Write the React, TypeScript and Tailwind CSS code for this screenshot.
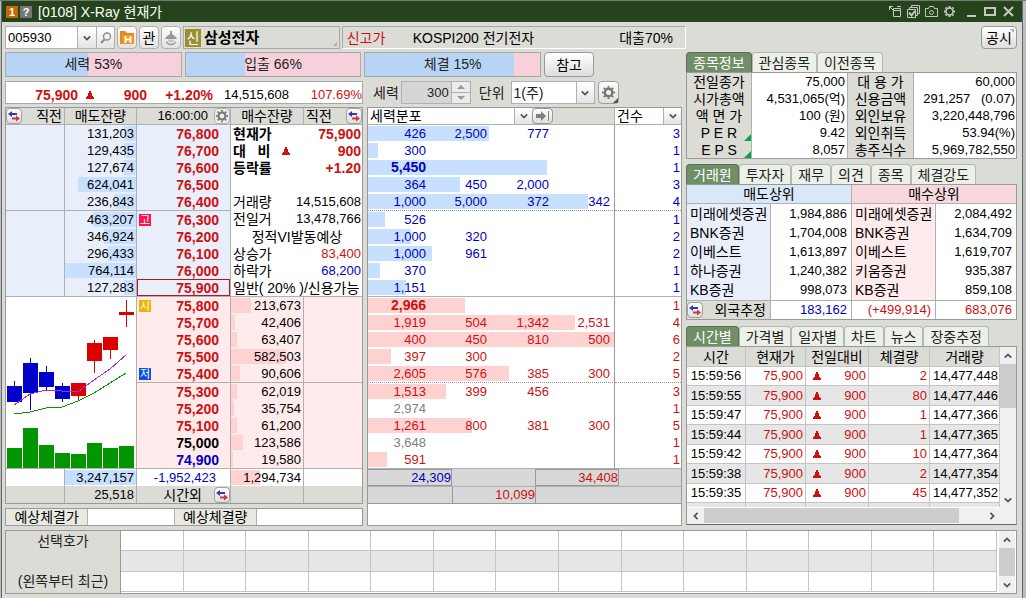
import { useState, type ReactNode } from 'react'

interface AskRow { qty: number; price: string; mark?: boolean }
interface BidRow { price: string; qty: number; tone: string; mark?: { text: string; color: string } }
interface PowerRow { values: string[]; count: number; total: number; tone: string; bold?: boolean }

const MAX_QTY = 764114
const MAX_POWER = 7500
const RED = 'text-[#cc1111]'
const BLUE = 'text-[#0000c0]'

const asks: AskRow[] = [
  { qty: 131203, price: '76,800' },
  { qty: 129435, price: '76,700' },
  { qty: 127674, price: '76,600' },
  { qty: 624041, price: '76,500' },
  { qty: 236843, price: '76,400' },
  { qty: 463207, price: '76,300', mark: true },
  { qty: 346924, price: '76,200' },
  { qty: 296433, price: '76,100' },
  { qty: 764114, price: '76,000' },
  { qty: 127283, price: '75,900' },
]

const bids: BidRow[] = [
  { price: '75,800', qty: 213673, tone: RED, mark: { text: '시', color: 'bg-[#f0b400]' } },
  { price: '75,700', qty: 42406, tone: RED },
  { price: '75,600', qty: 63407, tone: RED },
  { price: '75,500', qty: 582503, tone: RED },
  { price: '75,400', qty: 90606, tone: RED, mark: { text: '저', color: 'bg-[#0a50e6]' } },
  { price: '75,300', qty: 62019, tone: RED },
  { price: '75,200', qty: 35754, tone: RED },
  { price: '75,100', qty: 61200, tone: RED },
  { price: '75,000', qty: 123586, tone: 'text-black' },
  { price: '74,900', qty: 19580, tone: BLUE },
]

const askPower: PowerRow[] = [
  { values: ['426', '2,500', '777'], count: 3, total: 3703, tone: BLUE },
  { values: ['300'], count: 1, total: 300, tone: BLUE },
  { values: ['5,450'], count: 1, total: 5450, tone: BLUE, bold: true },
  { values: ['364', '450', '2,000'], count: 3, total: 2814, tone: BLUE },
  { values: ['1,000', '5,000', '372', '342'], count: 4, total: 6714, tone: BLUE },
  { values: ['526'], count: 1, total: 526, tone: BLUE },
  { values: ['1,000', '320'], count: 2, total: 1320, tone: BLUE },
  { values: ['1,000', '961'], count: 2, total: 1961, tone: BLUE },
  { values: ['370'], count: 1, total: 370, tone: BLUE },
  { values: ['1,151'], count: 1, total: 1151, tone: BLUE },
]

const bidPower: PowerRow[] = [
  { values: ['2,966'], count: 1, total: 2966, tone: RED, bold: true },
  { values: ['1,919', '504', '1,342', '2,531'], count: 4, total: 6296, tone: RED },
  { values: ['400', '450', '810', '500'], count: 6, total: 7500, tone: RED },
  { values: ['397', '300'], count: 2, total: 697, tone: RED },
  { values: ['2,605', '576', '385', '300'], count: 5, total: 4300, tone: RED },
  { values: ['1,513', '399', '456'], count: 3, total: 2368, tone: RED },
  { values: ['2,974'], count: 1, total: 0, tone: 'text-[#808080]' },
  { values: ['1,261', '800', '381', '300'], count: 5, total: 3160, tone: RED },
  { values: ['3,648'], count: 1, total: 0, tone: 'text-[#808080]' },
  { values: ['591'], count: 1, total: 591, tone: RED },
]

const stockInfo = [
  ['전일종가', '75,000', '대 용 가', '60,000'],
  ['시가총액', '4,531,065(억)', '신용금액', '291,257   (0.07)'],
  ['액 면 가', '100 (원)', '외인보유', '3,220,448,796'],
  ['P E R', '9.42', '외인취득', '53.94(%)'],
  ['E P S', '8,057', '총주식수', '5,969,782,550'],
]

const brokers = [
  ['미래에셋증권', '1,984,886', '미래에셋증권', '2,084,492'],
  ['BNK증권', '1,704,008', 'BNK증권', '1,634,709'],
  ['이베스트', '1,613,897', '이베스트', '1,619,707'],
  ['하나증권', '1,240,382', '키움증권', '935,387'],
  ['KB증권', '998,073', 'KB증권', '859,108'],
]

const ticks = [
  ['15:59:56', '2', '14,477,448'],
  ['15:59:55', '80', '14,477,446'],
  ['15:59:47', '1', '14,477,366'],
  ['15:59:44', '1', '14,477,365'],
  ['15:59:42', '10', '14,477,364'],
  ['15:59:38', '2', '14,477,354'],
  ['15:59:35', '45', '14,477,352'],
]

// [wick top, body top, body bottom, wick bottom, volume top, up?]
const candles: [number, number, number, number, number, boolean][] = [
  [84, 89, 105, 105, 151, false],
  [61, 66, 96, 113, 131, false],
  [69, 75, 90, 93, 148, false],
  [86, 89, 102, 105, 156, false],
  [86, 86, 99, 104, 157, true],
  [43, 46, 64, 76, 146, true],
  [40, 40, 53, 62, 151, true],
  [3, 15, 18, 30, 149, true],
]

function UpMark() {
  return (
    <svg viewBox="0 0 8 8" className="inline-block w-2 h-2 shrink-0" fill="#cc1111" aria-hidden="true">
      <path d="M3 0h2v2h1v3h1v1h1v2H0V6h1V5h1V2h1z" />
    </svg>
  )
}

function SwapButton({ label }: { label: string }) {
  return (
    <button aria-label={label}
      className="flex items-center justify-center w-4 h-4 shrink-0 rounded border border-[#a0a0a0] bg-linear-to-b from-white to-[#dedede]">
      <svg viewBox="0 0 14 12" className="w-[14px] h-3 shrink-0">
        <path d="M1 4l4-3v2h5v2H5v2z" fill="#3838b8" />
        <path d="M13 8.500l-4-3v2H5v2h4v2z" fill="#d03838" />
      </svg>
    </button>
  )
}

function Gear({ className }: { className: string }) {
  return (
    <svg viewBox="0 0 16 16" className={className} stroke="#777" fill="none" aria-hidden="true">
      <circle cx="8" cy="8" r="4" strokeWidth="2.500" />
      <path strokeWidth="2" d="M8 1v2M8 13v2M1 8h2M13 8h2M3 3l1.500 1.500M11.500 11.500L13 13M13 3l-1.500 1.500M4.500 11.500L3 13" />
    </svg>
  )
}

function Chevron({ dir }: { dir: 'up' | 'down' | 'left' | 'right' }) {
  const d = {
    up: 'M1 7l4-4 4 4',
    down: 'M1 3l4 4 4-4',
    left: 'M7 1L3 5l4 4',
    right: 'M3 1l4 4-4 4',
  }[dir]
  return (
    <svg viewBox="0 0 10 10" className="w-2 h-2" fill="none" stroke="#555" strokeWidth="2.200" aria-hidden="true">
      <path d={d} />
    </svg>
  )
}

function DropDown({ label, value, className }: { label: string; value: string; className: string }) {
  return (
    <div className={`relative bg-white ${className}`}>
      <select aria-label={label} className="block w-full h-full appearance-none pl-0.5 leading-4 outline-none">
        <option>{value}</option>
      </select>
      <span className="pointer-events-none absolute inset-y-0 right-0 w-[18px] flex items-center justify-center border-l border-[#b0b0b0] bg-linear-to-b from-white to-[#e4e4e4]">
        <Chevron dir="down" />
      </span>
    </div>
  )
}

function Tabs({ names }: { names: string[] }) {
  const [active, setActive] = useState(0)
  return (
    <div role="tablist" className="flex h-5">
      {names.map((name, i) => (
        <button key={name} role="tab" aria-selected={i === active} onClick={() => setActive(i)}
          className={`h-5 px-1.5 rounded-t border border-b-0 leading-[18px] whitespace-nowrap ${
            i === active
              ? 'bg-[#6f8f66] border-[#5c6b58] text-white'
              : 'bg-[#ebf0e8] border-[#b4b8b0] text-[#222]'
          }`}>
          {name}
        </button>
      ))}
    </div>
  )
}

function VScroll({ thumb }: { thumb: string }) {
  return (
    <div className="w-4 shrink-0 flex flex-col bg-[#f0f0f0]">
      <button aria-label="위로" className="h-[17px] shrink-0 flex items-center justify-center"><Chevron dir="up" /></button>
      <div className={`bg-[#cdcdcd] ${thumb}`} />
      <button aria-label="아래로" className="h-[17px] shrink-0 mt-auto flex items-center justify-center"><Chevron dir="down" /></button>
    </div>
  )
}

function TitleBar() {
  return (
    <header className="flex items-center h-[21px] bg-[#26441c] text-white pl-1 pr-2">
      <span className="w-3 h-3 bg-[#c46a00] text-[11px] leading-3 font-bold text-center">1</span>
      <span className="w-3 h-3 ml-0.5 bg-[#777] text-[11px] leading-3 font-bold text-center">?</span>
      <h1 className="ml-1.5 flex-1 leading-5">[0108] X-Ray 현재가</h1>
      <div className="flex items-center gap-[5px] text-[#c4c9bf]">
        <button aria-label="창 이동">
          <svg viewBox="0 0 14 13" className="w-[14px] h-[13px]" fill="none" stroke="currentColor">
            <path d="M5.500 3.500h7v8h-7zM5 5.500h8M1 1l4 4M1.500 5V1.500H5" />
            <path d="M9 1.500h4" />
          </svg>
        </button>
        <button aria-label="화면 복사">
          <svg viewBox="0 0 13 13" className="w-[13px] h-[13px]" fill="none" stroke="currentColor">
            <path d="M.5 4.500h8v8h-8zM2.500 4V2.500h8v8H9M4.500 2V.5h8v8H11" />
            <path strokeWidth="2" d="M2 7.500l2.500 3L8 6" />
          </svg>
        </button>
        <button aria-label="화면 캡처">
          <svg viewBox="0 0 13 13" className="w-[13px] h-[13px]" fill="none" stroke="currentColor">
            <path d="M.5 3.500h3l1-2h4l1 2h3v8H.5z" />
            <circle cx="6.500" cy="7.500" r="2" />
          </svg>
        </button>
        <button aria-label="화면 설정">
          <svg viewBox="0 0 13 13" className="w-[13px] h-[13px]" fill="none" stroke="currentColor">
            <circle cx="6.500" cy="6.500" r="3.500" strokeWidth="1.500" />
            <path strokeWidth="2" d="M6.500 1v2M6.500 10v2M1 6.500h2M10 6.500h2M2.500 2.500l1 1M9.500 9.500l1 1M10.500 2.500l-1 1M3.500 9.500l-1 1" />
          </svg>
        </button>
      </div>
      <div className="flex items-center gap-[7px] ml-2.5 text-[#c4c9bf]">
        <button aria-label="최소화">
          <svg viewBox="0 0 11 11" className="w-[11px] h-[11px]" fill="none" stroke="currentColor" strokeWidth="2"><path d="M1 10h9" /></svg>
        </button>
        <button aria-label="최대화">
          <svg viewBox="0 0 12 11" className="w-3 h-[11px]" fill="none" stroke="currentColor" strokeWidth="2"><path d="M1 2h10v7H1z" /></svg>
        </button>
        <button aria-label="닫기">
          <svg viewBox="0 0 11 11" className="w-[11px] h-[11px]" fill="none" stroke="currentColor" strokeWidth="2"><path d="M1 1l9 9M10 1l-9 9" /></svg>
        </button>
      </div>
    </header>
  )
}

const ICON_BUTTON = 'w-5 h-[23px] shrink-0 flex items-center justify-center rounded border border-[#b0b0b0] bg-linear-to-b from-white to-[#e2e2e2]'

function SearchRow() {
  return (
    <div className="flex gap-0.5 h-[23px] -mr-1">
      <div className="flex w-[110px] shrink-0 border border-[#b0b0b0] bg-white">
        <input aria-label="종목코드" defaultValue="005930" className="w-[71px] min-w-0 pl-0.5 text-[13px] outline-none" />
        <button aria-label="종목 목록" className="w-[19px] flex items-center justify-center border-l border-[#b0b0b0] bg-linear-to-b from-white to-[#e4e4e4]">
          <Chevron dir="down" />
        </button>
        <button aria-label="종목 검색" className="flex-1 flex items-center justify-center border-l border-[#b0b0b0] bg-linear-to-b from-white to-[#e4e4e4]">
          <svg viewBox="0 0 12 12" className="w-3 h-3" fill="none" stroke="#8a8a8a">
            <circle cx="7" cy="4.500" r="3.500" strokeWidth="1.300" />
            <path d="M4.500 7.500L1 11" strokeWidth="2" />
          </svg>
        </button>
      </div>
      <button aria-label="보유종목" className={ICON_BUTTON}>
        <svg viewBox="0 0 16 15" className="w-4 h-[15px] shrink-0">
          <path d="M1 1h5l2 2h7v11H1z" fill="#e08a1e" />
          <path d="M3 5h12v9H3z" fill="#f0961e" />
          <path d="M6.500 6v7M11.500 6v7M6 9.500h5" stroke="#fff" strokeWidth="1.800" />
        </svg>
      </button>
      <button className={`${ICON_BUTTON} leading-5`}>관</button>
      <button aria-label="조명" className={ICON_BUTTON}>
        <svg viewBox="0 0 14 16" className="w-[14px] h-4 shrink-0">
          <path d="M6 1h2v3l4 3 1 2H1l1-2 4-3z" fill="#9a9a9a" />
          <path d="M4 9.500h6v1.500l-2 1.500H6L4 11z" fill="#c4c4c4" />
          <path d="M2.500 11.500c1 4 8 4 9 0" fill="none" stroke="#9a9a9a" strokeWidth="1.300" />
        </svg>
      </button>
      <div className="flex flex-[160] min-w-0 items-center border border-[#a8a8a8] px-px relative">
        <span className="w-4 h-[18px] bg-[#9a8f30] text-white text-center leading-[18px]">신</span>
        <h2 className="ml-[3px] text-[15px] leading-5 font-bold">삼성전자</h2>
        <svg viewBox="0 0 4 4" className="absolute right-0.5 bottom-0.5 w-1 h-1" fill="#aaa"><path d="M4 0v4H0z" /></svg>
      </div>
      <div className="flex flex-[342] min-w-0 items-center border border-[#a8a8a8] border-r-white border-b-white pl-1 pr-3 whitespace-nowrap">
        <span className={`w-[66px] ${RED}`}>신고가</span>
        <span className="flex-1">KOSPI200 전기전자</span>
        <span>대출70%</span>
      </div>
    </div>
  )
}

function Gauge({ name, percent }: { name: string; percent: number }) {
  return (
    <div className="relative flex-1 h-[25px] border border-[#a8a8a8] bg-[#f6d0da]">
      <div className="absolute inset-y-0 left-0 bg-[#b8d4f4]" style={{ width: `${100 - percent}%` }} />
      <span className="relative block text-center leading-[23px] text-[#222]">{name} {percent}%</span>
    </div>
  )
}

function SummaryRow() {
  return (
    <div className="grid grid-cols-[minmax(0,358fr)_minmax(0,315fr)] gap-1 h-[23px]">
      <div className={`flex items-center h-[23px] pt-1 border border-[#a8a8a8] bg-white font-bold ${RED}`}>
        <span className="w-[72px] text-right">75,900</span>
        <span className="w-4 ml-2 flex"><UpMark /></span>
        <span className="w-[45px] text-right">900</span>
        <span className="flex-1 text-right">+1.20%</span>
        <span className="w-[76px] text-right text-[13px] font-normal text-black">14,515,608</span>
        <span className="w-[73px] text-right text-[13px] font-normal">107.69%</span>
      </div>
      <div className="flex items-center pl-1.5 text-[#222]">
        <label htmlFor="power">세력</label>
        <div className="flex ml-0.5 h-[23px] border border-[#b0b0b0]">
          <input id="power" defaultValue="300" className="w-[49px] pr-0.5 bg-[#d6d6d6] text-right text-[13px] outline-none" />
          <div className="w-[19px] flex flex-col border-l border-[#b0b0b0] bg-[#ececec]">
            <button aria-label="증가" className="flex-1 flex items-center justify-center border-b border-[#b0b0b0]">
              <svg viewBox="0 0 8 4" className="w-2 h-1" fill="#999"><path d="M4 0l4 4H0z" /></svg>
            </button>
            <button aria-label="감소" className="flex-1 flex items-center justify-center">
              <svg viewBox="0 0 8 4" className="w-2 h-1" fill="#999"><path d="M4 4L0 0h8z" /></svg>
            </button>
          </div>
        </div>
        <span className="ml-2">단위</span>
        <DropDown label="단위" value="1(주)" className="ml-1.5 w-[84px] h-[23px] border border-[#b0b0b0]" />
        <button aria-label="설정" className="relative ml-[3px] w-[21px] h-[23px] flex items-center justify-center rounded border border-[#a0a0a0] bg-linear-to-b from-white to-[#dedede]">
          <Gear className="w-[15px] h-[15px]" />
          <svg viewBox="0 0 5 5" className="absolute right-0 bottom-0 w-[5px] h-[5px]" fill="#555"><path d="M5 0v5H0z" /></svg>
        </button>
      </div>
    </div>
  )
}

function CandleChart() {
  return (
    <svg viewBox="0 0 130 171" preserveAspectRatio="none" className="block w-full h-[171px]" shapeRendering="crispEdges">
      {candles.map(([high, top, bottom, low, volume, up], i) => (
        <g key={i} fill={up ? '#dd0000' : '#0000c8'}>
          <rect x={1 + i * 16} y={top} width="15" height={bottom - top} />
          <rect x={8 + i * 16} y={high} width="1" height={low - high} />
          <rect x={1 + i * 16} y={volume} width="15" height={171 - volume} fill="#009600" />
        </g>
      ))}
      <polyline points="8,108 24,97 40,93 56,94 72,95 88,83 104,72 120,58" fill="none" stroke="#9933ee" />
      <polyline points="8,117 24,115 40,111 56,110 72,104 88,96 104,86 120,76" fill="none" stroke="#009600" />
    </svg>
  )
}

function QuoteSummary() {
  const row = 'flex justify-between items-center h-[17px] whitespace-nowrap'
  const num = 'text-[13px]'
  return (
    <div className="h-[171px] pl-0.5 pr-px bg-white">
      <div className={`${row} font-bold`}><span>현재가</span><span className={RED}>75,900</span></div>
      <div className={`${row} font-bold`}>
        <span className="whitespace-pre">대   비</span>
        <span className="flex-1 pl-3 flex"><UpMark /></span>
        <span className={RED}>900</span>
      </div>
      <div className={`${row} font-bold`}><span>등락률</span><span className={RED}>+1.20</span></div>
      <div className={row} />
      <div className={row}><span>거래량</span><span className={num}>14,515,608</span></div>
      <div className={row}><span>전일거</span><span className={num}>13,478,766</span></div>
      <div className="h-[18px] text-center whitespace-nowrap leading-5">정적VI발동예상</div>
      <div className={row}><span>상승가</span><span className={`${num} ${RED}`}>83,400</span></div>
      <div className={row}><span>하락가</span><span className={`${num} ${BLUE}`}>68,200</span></div>
      <div className={row}>일반( 20% )/신용가능</div>
    </div>
  )
}

function QtyBar({ value, max, side, children }: { value: number; max: number; side: 'ask' | 'bid'; children: ReactNode }) {
  return (
    <div className="relative h-[17px]">
      <div className={`absolute top-px h-[15px] ${side === 'ask' ? 'right-0 bg-[#c8e0ff]' : 'left-0 bg-[#ffd2d2]'}`}
        style={{ width: `${(value / max) * 100}%` }} />
      <span className="relative block pr-0.5 text-right text-[13px] leading-[17px]">{children}</span>
    </div>
  )
}

function OrderBook() {
  const head = 'h-[17px] p-0 font-normal bg-[#dcdcd6] border-b border-[#b0b0b0]'
  // the fifth and the last rung of each side carry a rule
  const line = (i: number) => (i % 5 === 4 ? 'h-[18px] border-b border-[#b0b0b0]' : 'h-[17px] border-[#b0b0b0]')
  return (
    <div className="border border-[#999] bg-white">
      <table className="w-full table-fixed border-separate border-spacing-0 leading-4">
        <colgroup>
          <col className="w-[59px]" /><col className="w-[72px]" /><col className="w-[94px]" /><col className="w-[73px]" /><col className="w-[58px]" />
        </colgroup>
        <thead>
          <tr>
            <th className={`${head} border-r`}><div className="flex justify-between pr-0.5"><SwapButton label="매도 전환" />직전</div></th>
            <th className={`${head} border-r`}>매도잔량</th>
            <th className={`${head} border-r`}>
              <div className="flex justify-end items-center gap-1.5 text-[13px]">
                16:00:00
                <button aria-label="호가 설정" className="w-4 h-4 flex items-center justify-center rounded border border-[#b0b0b0] bg-[#eee]"><Gear className="w-[14px] h-[14px]" /></button>
              </div>
            </th>
            <th className={`${head} border-r`}>매수잔량</th>
            <th className={head}><div className="flex justify-between pl-0.5">직전<SwapButton label="매수 전환" /></div></th>
          </tr>
        </thead>
        <tbody>
          {asks.map((row, i) => (
            <tr key={row.price}>
              <td className={`p-0 border-r bg-[#e8effb] ${line(i)}`} />
              <td className={`p-0 border-r bg-[#e8effb] align-top ${line(i)}`}>
                <QtyBar value={row.qty} max={MAX_QTY} side="ask">{row.qty.toLocaleString('en-US')}</QtyBar>
              </td>
              <td className={`p-0 border-r bg-[#e8effb] align-top ${line(i)}`}>
                <div className={`flex items-center h-[17px] pl-0.5 pr-[11px] ${i === 9 ? 'outline outline-1 -outline-offset-1 outline-[#c01414]' : ''}`}>
                  {row.mark && <span className="w-3 h-3 bg-[#ff1450] text-white text-[11px] leading-3 text-center">고</span>}
                  <span className={`ml-auto font-bold ${RED}`}>{row.price}</span>
                </div>
              </td>
              {i === 0 && <td rowSpan={10} colSpan={2} className="p-0 align-top border-b border-[#b0b0b0]"><QuoteSummary /></td>}
            </tr>
          ))}
          {bids.map((row, i) => (
            <tr key={row.price}>
              {i === 0 && <td rowSpan={10} colSpan={2} className="p-0 align-top border-r border-b border-[#b0b0b0]"><CandleChart /></td>}
              <td className={`p-0 border-r bg-[#ffebeb] align-top ${line(i)}`}>
                <div className="flex items-center h-[17px] pl-0.5 pr-[11px]">
                  {row.mark && <span className={`w-3 h-3 text-white text-[11px] leading-3 text-center ${row.mark.color}`}>{row.mark.text}</span>}
                  <span className={`ml-auto font-bold ${row.tone}`}>{row.price}</span>
                </div>
              </td>
              <td className={`p-0 border-r bg-[#ffebeb] align-top ${line(i)}`}>
                <QtyBar value={row.qty} max={MAX_QTY} side="bid">{row.qty.toLocaleString('en-US')}</QtyBar>
              </td>
              <td className={`p-0 bg-[#ffebeb] ${line(i)}`} />
            </tr>
          ))}
        </tbody>
        <tfoot>
          <tr>
            <td className="p-0 h-[17px] border-r border-[#b0b0b0]" />
            <td className="p-0 border-r border-[#b0b0b0]"><QtyBar value={1} max={1} side="ask">3,247,157</QtyBar></td>
            <td className={`p-0 pr-[14px] border-r border-[#b0b0b0] text-right text-[13px] ${BLUE}`}>-1,952,423</td>
            <td className="p-0 border-r border-[#b0b0b0]"><QtyBar value={1294734} max={3247157} side="bid">1,294,734</QtyBar></td>
            <td className="p-0" />
          </tr>
          <tr className="bg-[#dcdcd6]">
            <td className="p-0 h-[17px] border-r border-[#b0b0b0]" />
            <td className="p-0 pr-0.5 border-r border-[#b0b0b0] text-right text-[13px]">25,518</td>
            <td className="p-0 border-r border-[#b0b0b0]">
              <div className="flex justify-end items-center gap-3 h-[17px]">시간외<SwapButton label="시간외 전환" /></div>
            </td>
            <td className="p-0 border-r border-[#b0b0b0]" />
            <td className="p-0" />
          </tr>
        </tfoot>
      </table>
    </div>
  )
}

function PowerLine({ row, side, i }: { row: PowerRow; side: 'ask' | 'bid'; i: number }) {
  const rule = i === 4 ? 'h-[18px] border-b border-dotted border-b-[#999]' : i === 9 ? 'h-[18px] border-b border-b-[#b0b0b0]' : 'h-[17px]'
  const countTone = row.tone === BLUE ? BLUE : RED
  return (
    <tr>
      <td className={`p-0 align-top ${rule}`}>
        <div className="relative h-[17px] border-r border-[#999]">
          <div className={`absolute left-0 top-px h-[15px] ${side === 'ask' ? 'bg-[#c8e0ff]' : 'bg-[#ffd2d2]'}`}
            style={{ width: `${(row.total / MAX_POWER) * 100}%` }} />
          <div className={`relative grid grid-cols-[58fr_61fr_62fr_61fr_4fr] text-right leading-[17px] ${row.bold ? 'font-bold text-[14px]' : 'text-[13px]'} ${row.tone}`}>
            {row.values.map((value, n) => <span key={n}>{value}</span>)}
          </div>
        </div>
      </td>
      <td className={`p-0 pr-px text-right text-[13px] leading-[17px] align-top ${rule} ${countTone}`}>{row.count}</td>
    </tr>
  )
}

function PowerPanel() {
  return (
    <div className="border border-[#999] bg-white">
      <table className="w-full table-fixed border-separate border-spacing-0 leading-4">
        <colgroup><col className="w-[247px]" /><col className="w-[66px]" /></colgroup>
        <thead>
          <tr>
            <th className="p-0 h-[17px] font-normal bg-[#dcdcd6] border-r border-b border-[#b0b0b0]">
              <div className="flex h-4">
                <DropDown label="분포 종류" value="세력분포" className="w-[164px] h-4" />
                <button aria-label="다음" className="w-[21px] h-4 flex items-center justify-center rounded border border-[#999] bg-linear-to-b from-white to-[#dedede]">
                  <svg viewBox="0 0 14 10" className="w-[14px] h-[10px]" fill="#808080"><path d="M0 3h5V0l5 5-5 5V7H0zM12 0h1v10h-1z" /></svg>
                </button>
              </div>
            </th>
            <th className="p-0 font-normal border-b border-[#b0b0b0]"><DropDown label="건수" value="건수" className="h-4" /></th>
          </tr>
        </thead>
        <tbody>
          {askPower.map((row, i) => <PowerLine key={i} row={row} side="ask" i={i} />)}
          {bidPower.map((row, i) => <PowerLine key={i} row={row} side="bid" i={i} />)}
        </tbody>
      </table>
      <div className="bg-[#d8d8d8] text-[13px] leading-4 text-right">
        <div className="flex h-[18px] border-b border-[#b0b0b0]">
          <span className={`w-[84px] border border-l-0 border-[#999] ${BLUE}`}>24,309</span>
          <span className={`w-[84px] ml-[83px] border border-[#999] ${RED}`}>34,408</span>
        </div>
        <div className="flex h-[17px] border-b border-[#999]">
          <span className={`w-[84px] ml-[84px] border-x border-[#999] ${RED}`}>10,099</span>
        </div>
      </div>
    </div>
  )
}

function StockInfo() {
  const label = 'p-0 h-[17px] font-normal text-center bg-[#dcdcd6] border-r border-[#b0b0b0] whitespace-pre relative'
  return (
    <section>
      <Tabs names={['종목정보', '관심종목', '이전종목']} />
      <div className="border border-[#999] bg-white">
        <table className="w-full table-fixed border-separate border-spacing-0 leading-4">
          <colgroup><col className="w-[65px]" /><col className="w-[96px]" /><col className="w-[66px]" /><col className="w-[102px]" /></colgroup>
          <tbody>
            {stockInfo.map(([a, b, c, d], i) => (
              <tr key={a}>
                <th className={label}>
                  {a}
                  {i > 2 && <svg viewBox="0 0 7 7" className="absolute right-0 bottom-0 w-[7px] h-[7px]" fill="#00a550"><path d="M7 0v7H0z" /></svg>}
                </th>
                <td className="p-0 pr-0.5 text-right text-[13px] border-r border-[#b0b0b0]">{b}</td>
                <th className={label}>{c}</th>
                <td className="p-0 pr-px text-right text-[13px] whitespace-pre">{d}</td>
              </tr>
            ))}
          </tbody>
        </table>
      </div>
    </section>
  )
}

function Brokers() {
  const num = 'p-0 pr-1 text-right text-[13px]'
  return (
    <section>
      <Tabs names={['거래원', '투자자', '재무', '의견', '종목', '체결강도']} />
      <div className="border border-[#999] bg-white">
        <table className="w-full h-[134px] table-fixed border-separate border-spacing-0 leading-4">
          <colgroup><col className="w-[84px]" /><col className="w-[81px]" /><col className="w-[84px]" /><col className="w-[80px]" /></colgroup>
          <thead>
            <tr>
              <th colSpan={2} className="p-0 h-[19px] font-normal bg-[#d8e8f8] border-r border-b border-[#b0b0b0]">매도상위</th>
              <th colSpan={2} className="p-0 font-normal bg-[#f8d8dc] border-b border-[#b0b0b0]">매수상위</th>
            </tr>
          </thead>
          <tbody>
            {brokers.map(([seller, sold, buyer, bought]) => (
              <tr key={seller}>
                <td className="p-0 pl-[3px] whitespace-nowrap bg-[#e8effb] border-r border-[#b0b0b0]">{seller}</td>
                <td className={`${num} border-r border-[#b0b0b0]`}>{sold}</td>
                <td className="p-0 pl-[3px] whitespace-nowrap bg-[#ffebeb] border-r border-[#b0b0b0]">{buyer}</td>
                <td className={num}>{bought}</td>
              </tr>
            ))}
          </tbody>
          <tfoot>
            <tr>
              <td className="p-0 h-[19px] bg-[#dcdcd6] border-r border-t border-[#b0b0b0]">
                <div className="flex justify-between items-center pr-1"><SwapButton label="외국계 전환" />외국추정</div>
              </td>
              <td className={`${num} border-r border-t border-[#b0b0b0] ${BLUE}`}>183,162</td>
              <td className={`${num} border-r border-t border-[#b0b0b0] ${RED}`}>(+499,914)</td>
              <td className={`${num} border-t border-[#b0b0b0] ${RED}`}>683,076</td>
            </tr>
          </tfoot>
        </table>
      </div>
    </section>
  )
}

function TickList() {
  const cell = 'p-0 border-r border-b border-[#c4c4c4] text-[13px]'
  return (
    <section className="mt-px">
      <Tabs names={['시간별', '가격별', '일자별', '차트', '뉴스', '장중추정']} />
      <div className="flex h-[179px] border border-[#999] border-b-[#666] bg-[#f0f0f0]">
        <div className="flex-1 min-w-0 flex flex-col">
          <div className="border-b border-white">
            <table className="w-full bg-white table-fixed border-separate border-spacing-0 leading-4">
              <colgroup>
                <col className="w-[59px]" /><col className="w-[60px]" /><col className="w-[63px]" /><col className="w-[61px]" /><col className="w-[70px]" />
              </colgroup>
              <thead>
                <tr className="bg-[#dcdcd6]">
                  {['시간', '현재가', '전일대비', '체결량', '거래량'].map(name => (
                    <th key={name} className="p-0 h-5 font-normal border-r border-b border-[#c4c4c4]">{name}</th>
                  ))}
                </tr>
              </thead>
              <tbody>
                {ticks.map(([time, qty, volume], i) => (
                  <tr key={time} className={i % 2 ? 'h-5 bg-[#e6e6e6]' : 'h-[19px] bg-white'}>
                    <td className={`${cell} text-center`}>{time}</td>
                    <td className={`${cell} pr-0.5 text-right ${RED}`}>75,900</td>
                    <td className={`${cell} ${RED}`}>
                      <div className="flex items-center justify-between pl-[7px] pr-0.5"><UpMark />900</div>
                    </td>
                    <td className={`${cell} pr-0.5 text-right ${RED}`}>{qty}</td>
                    <td className={`${cell} pr-px text-right`}>{volume}</td>
                  </tr>
                ))}
                {/* top edge of the next row, scrolled out of view */}
                <tr className="h-1 bg-[#e6e6e6]">
                  {ticks.slice(0, 5).map(([time]) => <td key={time} className="p-0 border-r border-[#c4c4c4]" />)}
                </tr>
              </tbody>
            </table>
          </div>
          <div className="flex flex-1">
            <button aria-label="왼쪽으로" className="w-[17px] flex items-center justify-center"><Chevron dir="left" /></button>
            <div className="flex-[255] mb-px bg-[#cdcdcd]" />
            <div className="flex-[24]" />
            <button aria-label="오른쪽으로" className="w-[17px] flex items-center justify-center"><Chevron dir="right" /></button>
          </div>
        </div>
        <div className="flex pb-4"><VScroll thumb="h-11" /></div>
      </div>
    </section>
  )
}

function SelectedQuotes() {
  const columns = Array.from({ length: 14 })
  return (
    <section className="flex mt-1 h-16 border border-[#999] bg-white">
      <div className="w-[115px] shrink-0 flex flex-col justify-between items-center pt-0.5 pb-1 bg-[#dcdcd6] border-r border-[#999] text-[#222]">
        <span>선택호가</span>
        <span className="whitespace-nowrap">(왼쪽부터 최근)</span>
      </div>
      <table className="flex-1 h-[61px] table-fixed border-separate border-spacing-0">
        <tbody>
          {[0, 1, 2].map(r => (
            <tr key={r} className={r === 1 ? 'bg-[#e6e6e6]' : 'bg-white'}>
              {columns.map((_, c) => <td key={c} className="p-0 border-r border-b border-[#c4c4c4]" />)}
            </tr>
          ))}
        </tbody>
      </table>
      <div className="flex pl-0.5 pr-px"><VScroll thumb="h-7" /></div>
    </section>
  )
}

export default function App() {
  return (
    <div className="min-h-screen flex bg-[#b5c0c6] border-t border-[#777] font-['Liberation_Sans','Noto_Sans_CJK_KR',sans-serif] text-[14px] leading-4 text-black">
      <div className="flex-1 min-w-0 ml-px mr-[3px] border-x border-[#666] bg-[#dcdcd6]">
        <TitleBar />
        <main className="pt-1 pl-[3px] pr-[5px]">
          <div className="flex gap-1">
            <div className="flex-[677] min-w-0 flex flex-col gap-[3px]">
              <SearchRow />
              <div className="flex gap-[3px] h-[26px]">
                <Gauge name="세력" percent={53} />
                <Gauge name="입출" percent={66} />
                <Gauge name="체결" percent={15} />
                <button className="w-[50px] h-[25px] mr-[88px] rounded border border-[#999] bg-linear-to-b from-white to-[#dedede]">참고</button>
              </div>
              <SummaryRow />
              <div className="grid grid-cols-[minmax(0,358fr)_minmax(0,315fr)] gap-1">
                <div className="flex flex-col gap-1">
                  <OrderBook />
                  <dl className="flex h-[18px] border border-[#999] bg-white text-center">
                    <dt className="flex-[82] bg-[#e8eae2] border-r border-[#b0b0b0]">예상체결가</dt>
                    <dd className="flex-[86] border-r border-[#b0b0b0]" />
                    <dt className="flex-[82] bg-[#e8eae2] border-r border-[#b0b0b0]">예상체결량</dt>
                    <dd className="flex-[106]" />
                  </dl>
                </div>
                <PowerPanel />
              </div>
            </div>
            <div className="flex-[331] min-w-0">
              <div className="flex justify-end mb-[3px]">
                <button className="relative w-9 h-[23px] rounded border border-[#999] bg-linear-to-b from-white to-[#dedede]">
                  공시
                  <svg viewBox="0 0 4 4" className="absolute right-0.5 top-0.5 w-1 h-1" fill="#aaa"><path d="M0 0h4v4z" /></svg>
                </button>
              </div>
              <div className="flex flex-col gap-[5px]">
                <StockInfo />
                <Brokers />
                <TickList />
              </div>
            </div>
          </div>
          <SelectedQuotes />
        </main>
      </div>
    </div>
  )
}
